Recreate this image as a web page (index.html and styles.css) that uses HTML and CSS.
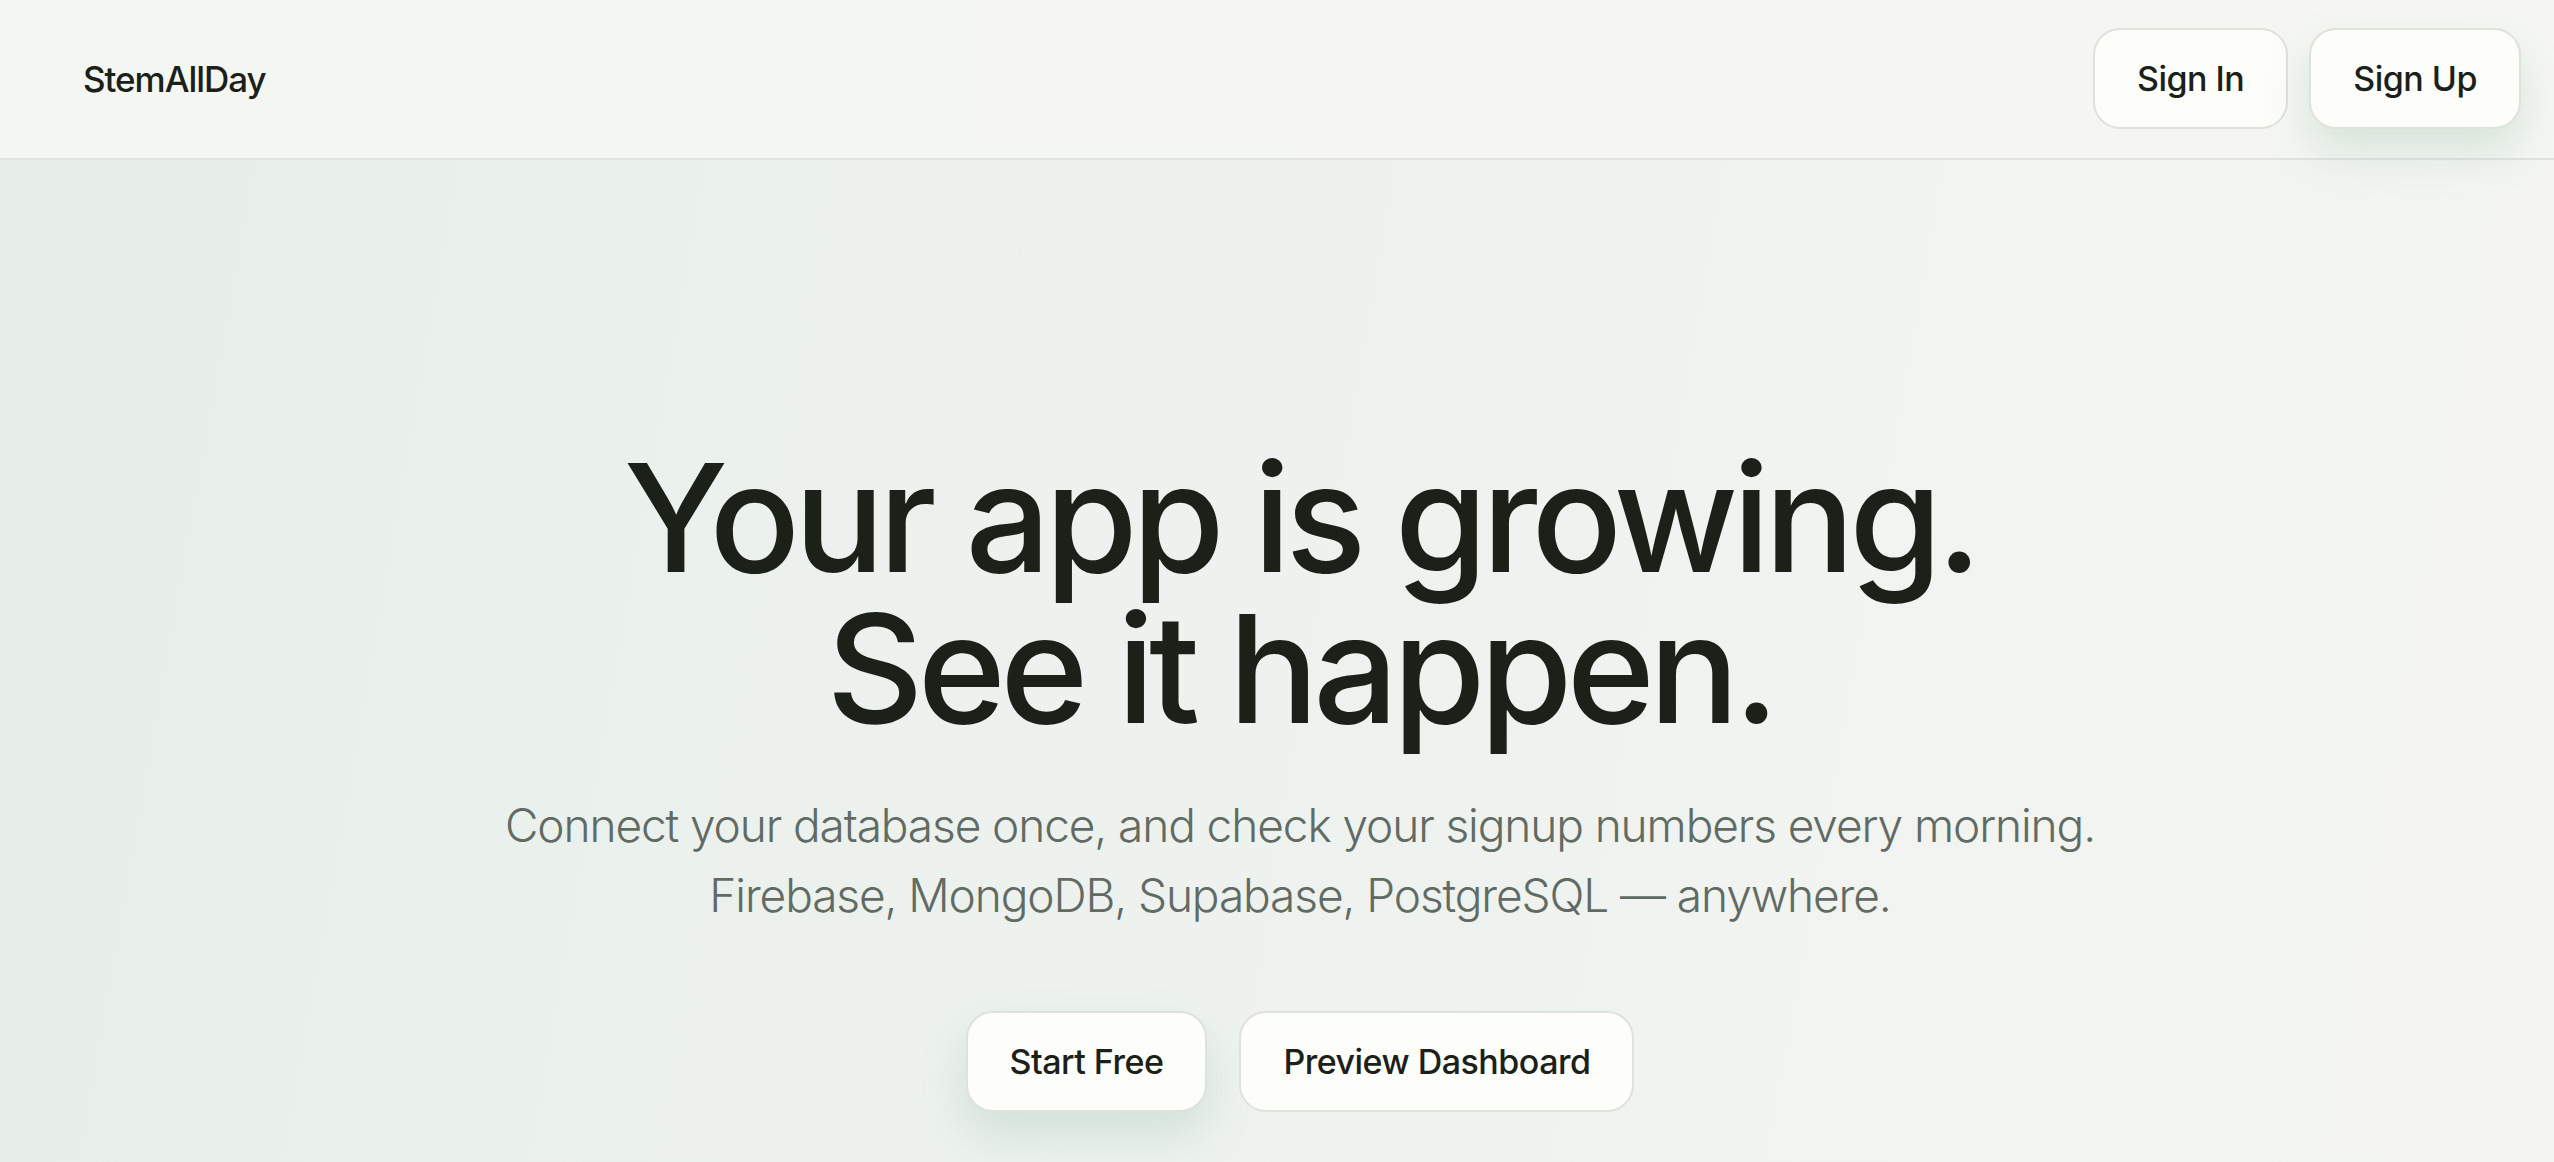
FILE: index.html
```html
<!DOCTYPE html>
<html lang="en">
<head>
    <meta charset="UTF-8">
    <meta name="viewport" content="width=device-width, initial-scale=1.0">
    <title>StemAllDay</title>
    <link rel="stylesheet" href="styles.css">
</head>
<body>
    <div class="header">
        <div class="logo">StemAllDay</div>
        <div class="nav-actions">
            <button class="btn">Sign In</button>
            <button class="btn btn-glow">Sign Up</button>
        </div>
    </div>

    <div class="hero">
        <h1>Your app is growing.<br>See it happen.</h1>
        <p class="lead">Connect your database once, and check your signup numbers every morning.<br>Firebase, MongoDB, Supabase, PostgreSQL — anywhere.</p>
        <div class="hero-actions">
            <button class="btn btn-glow">Start Free</button>
            <button class="btn">Preview Dashboard</button>
        </div>
    </div>
</body>
</html>
```

FILE: styles.css
```css
body {
    font-family: 'Inter', 'Noto Sans', sans-serif;
    margin: 0;
    padding: 0;
    background-color: #f2f4f0;
    color: #1b2019;
    min-height: 1162px;
    background: linear-gradient(100deg, #e7eee9 0%, #edf2ee 45%, #f4f5f1 100%);
}
.header {
    height: 158px;
    background: linear-gradient(90deg, #f4f6f2 0%, #f5f6f2 100%);
    border-bottom: 2px solid #dfe4de;
    padding: 0 33px 0 83px;
    display: flex;
    justify-content: space-between;
    align-items: center;
}
.logo {
    font-size: 35px;
    font-weight: 500;
    letter-spacing: -0.03em;
    color: #1b2019;
}
.nav-actions {
    display: flex;
    gap: 21px;
    margin-top: -2px;
}
.btn {
    font-family: inherit;
    font-size: 34px;
    font-weight: 500;
    letter-spacing: -0.015em;
    color: #1b2019;
    height: 101px;
    padding: 0 42px;
    background-color: #fdfdf9;
    border: 2px solid #dde2da;
    border-radius: 27px;
    cursor: pointer;
}
.btn-glow {
    box-shadow: 0 22px 44px rgba(112, 170, 138, 0.22);
}
.hero {
    padding: 282px 0 0 46px;
    text-align: center;
}
.hero h1 {
    margin: 0;
    font-size: 150px;
    line-height: 151px;
    font-weight: 500;
    letter-spacing: -0.038em;
    color: #1b2019;
}
.lead {
    margin: 46px 0 0;
    font-size: 46px;
    line-height: 70px;
    font-weight: 300;
    letter-spacing: -0.024em;
    color: #616b63;
}
.hero-actions {
    display: flex;
    justify-content: center;
    gap: 32px;
    margin-top: 81px;
}
```
